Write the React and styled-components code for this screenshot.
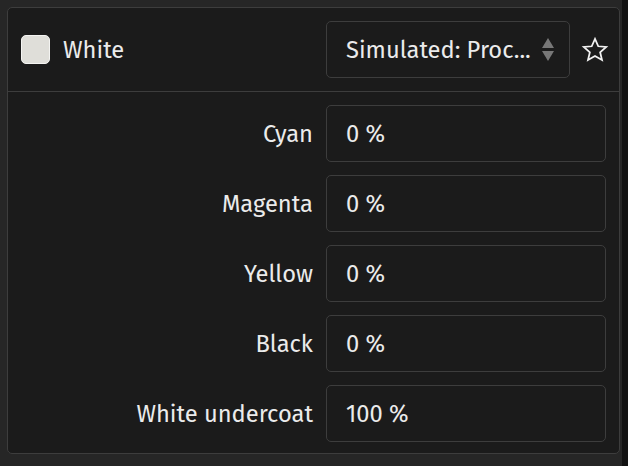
import React from "react";
import styled, { createGlobalStyle } from "styled-components";

const Global = createGlobalStyle`
  html, body { margin: 0; padding: 0; background: #262626; }
  body { font-family: "Fira Sans", "Open Sans", "Noto Sans", sans-serif; color: #ebebeb; }
  #root { height: 466px; }
`;

const Page = styled.div`
  display: flex;
  width: 628px;
  height: 466px;
  background: #262626;
`;

const Main = styled.div`
  flex: 1;
  padding: 7px 2px 10px 7px;
`;

const Strip = styled.div`
  width: 6px;
  background: #121212;
`;

const Panel = styled.div`
  border: 1px solid #3d3d3d;
  border-radius: 5px;
  background: #1b1b1b;
  display: flex;
  flex-direction: column;
  height: 447px;
  box-sizing: border-box;
`;

const Header = styled.div`
  height: 83px;
  display: flex;
  align-items: center;
  padding: 0 10px 0 13px;
  border-bottom: 1px solid #3d3d3d;
`;

const Check = styled.div`
  width: 27px;
  height: 27px;
  border: 1px solid #f4f4f2;
  border-radius: 5px;
  background: #dfded9;
`;

const Name = styled.div`
  margin-left: 13px;
  font-size: 23.7px;
  flex: 1;
`;

const Select = styled.div`
  width: 244px;
  height: 57px;
  box-sizing: border-box;
  border: 1px solid #3d3d3d;
  border-radius: 5px;
  display: flex;
  align-items: center;
  padding: 0 15px 0 19px;
  font-size: 23.7px;
`;

const SelectText = styled.div`
  flex: 1;
  white-space: nowrap;
  overflow: hidden;
`;

const Body = styled.div`
  flex: 1;
  display: flex;
  flex-direction: column;
  gap: 13px;
  padding: 13px 13px 0 0;
`;

const Row = styled.div`
  display: flex;
  align-items: center;
  gap: 13px;
`;

const Label = styled.div`
  width: 305px;
  text-align: right;
  font-size: 23.7px;
`;

const Input = styled.div`
  width: 280px;
  height: 57px;
  box-sizing: border-box;
  border: 1px solid #3d3d3d;
  border-radius: 5px;
  display: flex;
  align-items: center;
  padding-left: 19px;
  font-size: 23.7px;
`;

const StarWrap = styled.div`
  margin-left: 11px;
  display: flex;
`;

const rows = [
  ["Cyan", "0 %"],
  ["Magenta", "0 %"],
  ["Yellow", "0 %"],
  ["Black", "0 %"],
  ["White undercoat", "100 %"],
];

export default function App() {
  return (
    <Page>
      <Global />
      <Main>
        <Panel>
          <Header>
            <Check />
            <Name>White</Name>
            <Select>
              <SelectText>Simulated: Proc...</SelectText>
              <svg width="12" height="23" viewBox="0 0 12 23">
                <path d="M6 0 L12 10 L0 10 Z" fill="#777" />
                <path d="M0 13 L12 13 L6 23 Z" fill="#777" />
              </svg>
            </Select>
            <StarWrap>
              <svg width="28" height="28" viewBox="0 0 24 24" fill="none" stroke="#f2f2f2" strokeWidth="1.5" strokeLinejoin="miter">
                <path d="M12 2.5l2.8 6.3 6.8.6-5.2 4.5 1.6 6.7L12 17.1l-6 3.5 1.6-6.7-5.2-4.5 6.8-.6z" />
              </svg>
            </StarWrap>
          </Header>
          <Body>
            {rows.map(([l, v]) => (
              <Row key={l}>
                <Label>{l}</Label>
                <Input>{v}</Input>
              </Row>
            ))}
          </Body>
        </Panel>
      </Main>
      <Strip />
    </Page>
  );
}
